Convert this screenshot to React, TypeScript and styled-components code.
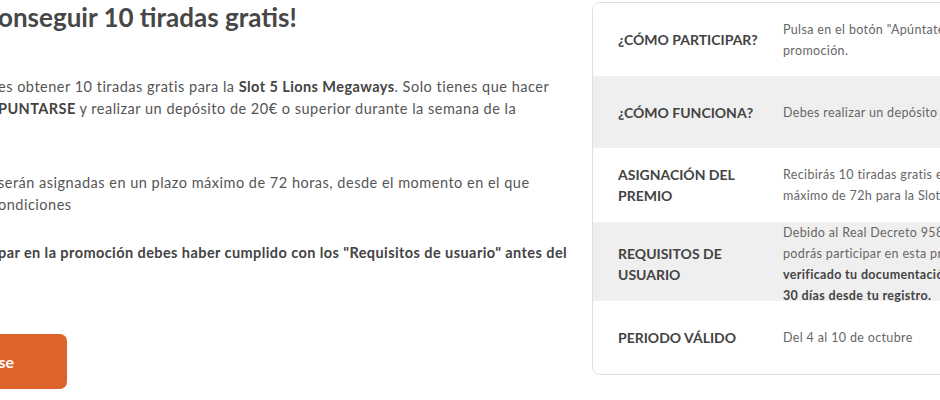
import React from "react";
import styled, { createGlobalStyle } from "styled-components";

const Global = createGlobalStyle`
  html, body { margin: 0; padding: 0; background: #fff; }
  body { font-family: Lato, "Open Sans", sans-serif; overflow: hidden; }
`;

const Page = styled.div`
  display: flex;
  width: 940px;
  height: 400px;
  overflow: hidden;
`;

const Left = styled.div`
  flex: 0 0 594px;
  margin-left: -2px;
  display: flex;
  flex-direction: column;
  color: #555;
`;

const Title = styled.h1`
  margin: 1px 0 0 0;
  font-size: 26px;
  line-height: 32px;
  font-weight: 700;
  color: #474747;
  white-space: nowrap;
`;

const Para = styled.p<{ $top: number }>`
  margin: ${(p) => p.$top}px 0 0 0;
  font-size: 14.5px;
  line-height: 22px;
  letter-spacing: 0.5px;
  white-space: nowrap;
  b { color: #444; font-weight: 700; letter-spacing: 0.42px; }
`;

const Button = styled.button`
  margin-top: 48px;
  margin-left: -60px;
  width: 129px;
  height: 55px;
  border: none;
  border-radius: 7px;
  background: #dc642b;
  color: #fff;
  font-family: inherit;
  font-size: 16px;
  font-weight: 700;
  text-align: right;
  padding: 0 53px 0 0;
`;

const Card = styled.div`
  flex: 0 0 440px;
  margin-top: 2px;
  align-self: flex-start;
  border: 1px solid #dedede;
  border-radius: 8px;
  overflow: hidden;
`;

const Row = styled.div<{ $h: number; $gray?: boolean }>`
  display: grid;
  grid-template-columns: 165px 1fr;
  align-items: center;
  height: ${(p) => p.$h}px;
  padding-left: 25px;
  background: ${(p) => (p.$gray ? "#efefef" : "#fff")};
`;

const Label = styled.div`
  font-size: 14px;
  line-height: 21px;
  font-weight: 700;
  color: #434343;
  text-transform: uppercase;
`;

const Value = styled.div`
  font-size: 12.5px;
  line-height: 21px;
  letter-spacing: 0.35px;
  color: #666;
  white-space: nowrap;
  b { color: #444; font-weight: 700; }
`;

export default function App() {
  return (
    <>
      <Global />
      <Page>
        <Left>
          <Title>onseguir 10 tiradas gratis!</Title>
          <Para $top={43}>
            es obtener 10 tiradas gratis para la <b>Slot 5 Lions Megaways</b>. Solo tienes que hacer
            <br />
            <b>PUNTARSE</b> y realizar un depósito de 20€ o superior durante la semana de la
          </Para>
          <Para $top={52}>
            serán asignadas en un plazo máximo de 72 horas, desde el momento en el que
            <br />
            ondiciones
          </Para>
          <Para $top={26}>
            <b>par en la promoción debes haber cumplido con los "Requisitos de usuario" antes del</b>
            <br />
            &nbsp;
          </Para>
          <Button>Apuntarse</Button>
        </Left>
        <Card>
          <Row $h={73}>
            <Label>¿Cómo participar?</Label>
            <Value>
              Pulsa en el botón "Apúntate" para participar en la
              <br />
              promoción.
            </Value>
          </Row>
          <Row $h={72} $gray>
            <Label>¿Cómo funciona?</Label>
            <Value>Debes realizar un depósito de 20€ o superior.</Value>
          </Row>
          <Row $h={74}>
            <Label>
              Asignación del
              <br />
              premio
            </Label>
            <Value>
              Recibirás 10 tiradas gratis en un plazo
              <br />
              máximo de 72h para la Slot 5 Lions Megaways.
            </Value>
          </Row>
          <Row $h={79} $gray>
            <Label>
              Requisitos de
              <br />
              usuario
            </Label>
            <Value>
              Debido al Real Decreto 958/2020, solo
              <br />
              podrás participar en esta promoción si has
              <br />
              <b>verificado tu documentación en los primeros</b>
              <br />
              <b>30 días desde tu registro.</b>
            </Value>
          </Row>
          <Row $h={73}>
            <Label>Periodo válido</Label>
            <Value>Del 4 al 10 de octubre</Value>
          </Row>
        </Card>
      </Page>
    </>
  );
}
